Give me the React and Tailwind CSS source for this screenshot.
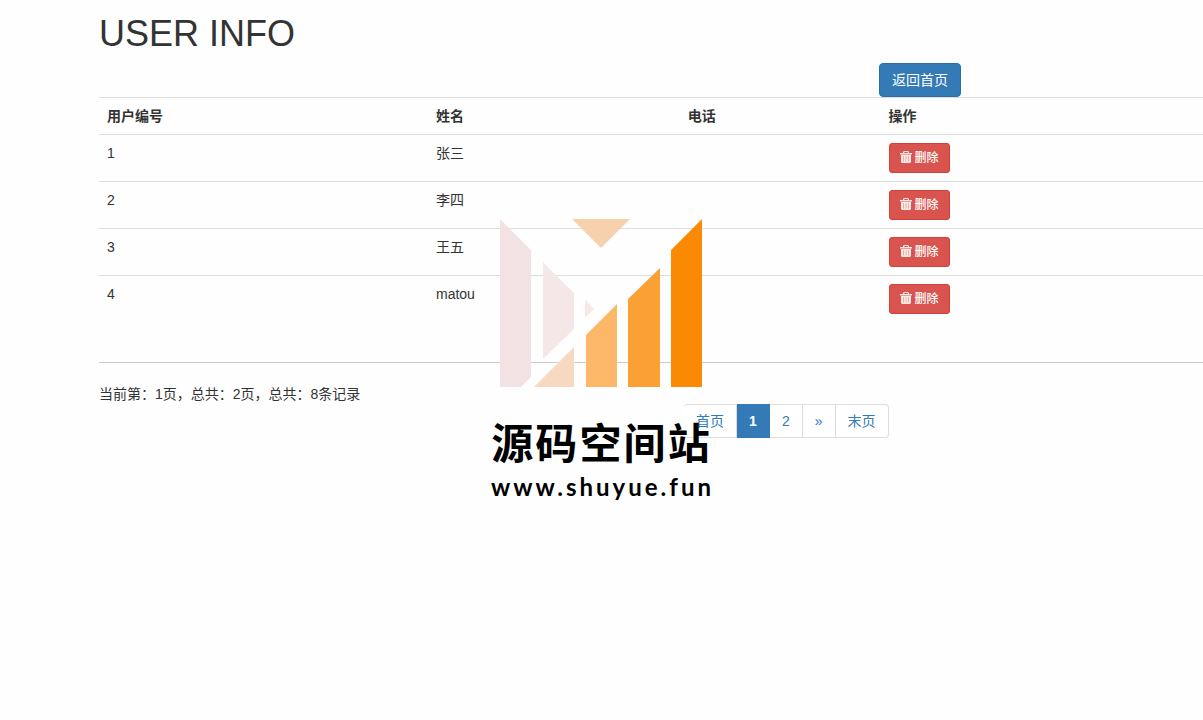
import React, { useState } from 'react'

const initialUsers = [
  { id: 1, name: '张三', phone: '' },
  { id: 2, name: '李四', phone: '' },
  { id: 3, name: '王五', phone: '' },
  { id: 4, name: 'matou', phone: '' },
]

function TrashIcon() {
  return (
    <svg className="h-3 w-3" viewBox="0 0 12 12" fill="currentColor" aria-hidden="true">
      <path
        fillRule="evenodd"
        d="M4 0h4l1 1v1h3v1.5H0V2h3V1zM4.2 1v1h3.6V1z"
      />
      <path
        fillRule="evenodd"
        d="M1 4h10v7l-1 1H2l-1-1zM3.4 5.2v5.4h.4V5.2zM5.8 5.2v5.4h.4V5.2zM8.2 5.2v5.4h.4V5.2z"
      />
    </svg>
  )
}

function Watermark() {
  return (
    <div className="pointer-events-none absolute inset-0 flex flex-col items-center pt-[218px] pr-0.5 text-black">
      <svg width="202" height="169" viewBox="0 0 202 169" aria-hidden="true">
        <path d="M0 1L31 32V159L21 169H0z" fill="#f3e2e3" />
        <path d="M43 44L74 75V111L43 141z" fill="#f5e7e7" />
        <path d="M85 81L94 91L85 100z" fill="#f8e9e8" />
        <path d="M72 1H130L101 30z" fill="#f7d0ad" />
        <path d="M34 169L74 129V169z" fill="#f7d9c2" />
        <path d="M86 117L117 86V169H86z" fill="#fcb768" />
        <path d="M128 81L160 50V169H128z" fill="#fba035" />
        <path d="M171 32L202 1V169H171z" fill="#fa8a03" />
      </svg>
      <p className="mt-7 pl-0.5 text-[42px] leading-[60px] font-bold tracking-wider">源码空间站</p>
      <p className="pl-1 font-['Lato','Noto_Sans',sans-serif] text-2xl leading-6 font-bold tracking-[3px]">www.shuyue.fun</p>
    </div>
  )
}

export default function App() {
  const [users, setUsers] = useState(initialUsers)

  const handleDelete = (id) => {
    setUsers(users.filter((u) => u.id !== id))
  }

  const pageLink = 'border border-l-0 border-[#dddddd] bg-white px-3 py-1.5 text-[#337ab7] hover:bg-gray-200'

  return (
    <div className="relative min-h-screen overflow-hidden bg-[#fefefe] pt-3.5 pl-[99px] font-['Liberation_Sans','Noto_Sans_CJK_SC',sans-serif] text-sm leading-5 text-[#333333]">
      <h1 className="mb-[9px] text-4xl leading-10">USER INFO</h1>

      <div className="flex pl-[70.65%]">
        <button type="button" className="rounded border border-[#2e6da4] bg-[#337ab7] px-3 py-1.5 leading-5 text-white">
          返回首页
        </button>
      </div>

      {/* User list */}
      <table className="w-full table-fixed border-collapse text-left">
        <thead>
          <tr className="border-y border-[#dddddd]">
            <th className="w-[29.8%] p-2">用户编号</th>
            <th className="w-[22.8%] p-2">姓名</th>
            <th className="w-[18.2%] p-2">电话</th>
            <th className="p-2">操作</th>
          </tr>
        </thead>
        <tbody>
          {users.map((u) => (
            <tr key={u.id} className="border-t border-[#dddddd] align-top">
              <td className="p-2">{u.id}</td>
              <td className="p-2">{u.name}</td>
              <td className="p-2">{u.phone}</td>
              <td className="p-2">
                <button
                  type="button"
                  onClick={() => handleDelete(u.id)}
                  className="flex items-start gap-[3px] rounded-[3px] border border-[#d43f3a] bg-[#d9534f] px-2.5 py-1 text-xs leading-5 font-medium text-white"
                >
                  <span className="pt-[3px] text-[#fbe9e4]">
                    <TrashIcon />
                  </span>
                  删除
                </button>
              </td>
            </tr>
          ))}
        </tbody>
      </table>

      <hr className="mt-10 mb-[21px] border-[#cccccc]" />

      <p>当前第：1页，总共：2页，总共：8条记录</p>

      <nav className="flex pl-[53%]" aria-label="分页">
        <a href="#first" className={`${pageLink} rounded-l border-l`}>首页</a>
        <a href="#1" aria-current="page" className="border border-l-0 border-[#337ab7] bg-[#337ab7] px-3 py-1.5 font-bold text-white">1</a>
        <a href="#2" className={pageLink}>2</a>
        <a href="#next" className={pageLink}>»</a>
        <a href="#last" className={`${pageLink} rounded-r`}>末页</a>
      </nav>

      <Watermark />
    </div>
  )
}
